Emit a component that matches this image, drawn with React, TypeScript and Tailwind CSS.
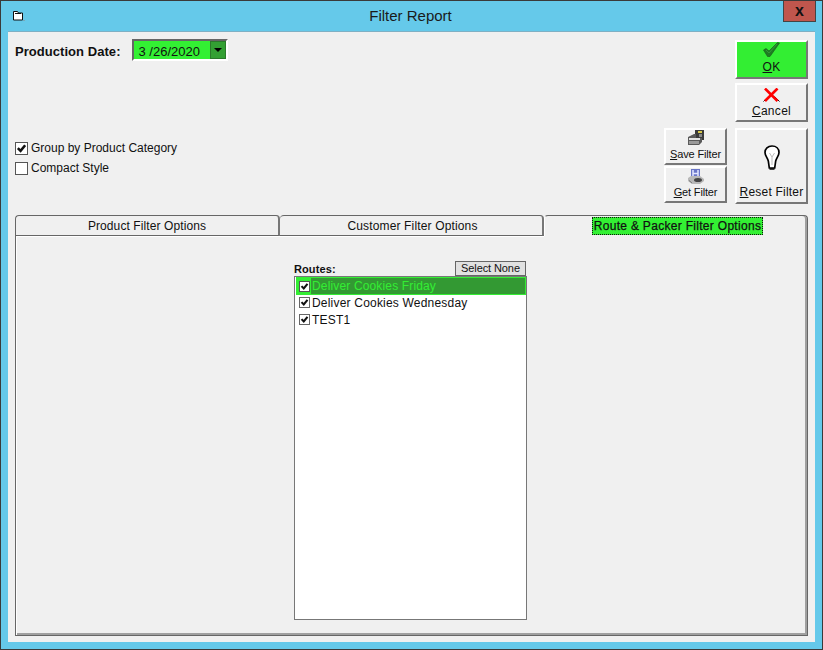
const font = "font-['Liberation_Sans',Arial,sans-serif]";

function Check({ className }: { className?: string }) {
  return (
    <svg viewBox="0 0 12 12" className={className}>
      <path d="M2 5.500 L5 8.500 L10 2.500" fill="none" stroke="#111" strokeWidth="2.800" />
    </svg>
  );
}

function CheckBox({ checked, label }: { checked?: boolean; label: string }) {
  return (
    <div className="flex items-center gap-[3px] h-[14px]">
      <span className="w-[13px] h-[13px] bg-white border border-[#555] flex items-center justify-center">
        {checked && <Check className="w-[11px] h-[11px]" />}
      </span>
      <span className="text-[12px] text-[#111]">{label}</span>
    </div>
  );
}

function RaisedButton({ className, children }: { className?: string; children: React.ReactNode }) {
  return (
    <div
      className={`flex flex-col items-center border-t-2 border-l-2 border-t-white border-l-white border-r-2 border-b-2 border-r-[#777] border-b-[#777] ${className ?? ""}`}
    >
      {children}
    </div>
  );
}

function FolderIcon() {
  return (
    <svg viewBox="0 0 13 12" className="w-[13px] h-[12px]">
      <path d="M1.500 1.500h4l1 1.500h4v7h-9z" fill="#fff" stroke="#111" />
      <path d="M3 3.500h6" stroke="#111" />
      <path d="M11.500 10.500h1" stroke="#888" />
    </svg>
  );
}

function GreenTick() {
  return (
    <svg viewBox="0 0 17 15" className="w-[17px] h-[15px]">
      <path d="M0.500 8 L3 6.500 L6 9 L14.500 0.500 L16.500 1 L7 14.500 L4.500 14.500 Z" fill="#1f7d24" stroke="#15581a" strokeWidth="0.600" />
      <path d="M3 8 L6 11 L14 2" fill="none" stroke="#3aa03f" strokeWidth="0.800" />
    </svg>
  );
}

function RedCross() {
  return (
    <svg viewBox="0 0 17 14" className="w-[17px] h-[14px]">
      <path d="M0.500 13.500 L5.500 8.500 M11.500 8.500 L16.500 13.500" stroke="#111" strokeWidth="1" />
      <path d="M2 0.500 L14.500 13" stroke="#f00" strokeWidth="2.600" />
      <path d="M14.500 0.500 L2 13" stroke="#f00" strokeWidth="2.600" />
    </svg>
  );
}

function Bulb() {
  return (
    <svg viewBox="0 0 16 25" className="w-[16px] h-[25px]">
      <path
        d="M8 1C3.800 1 1 3.800 1 7.500c0 3.300 2.700 5.500 3.300 8.500l1 7h5.400l1-7c.6-3 3.300-5.200 3.300-8.500C15 3.800 12.200 1 8 1z"
        fill="#fff"
        stroke="#000"
        strokeWidth="1.700"
      />
      <path d="M5.500 8 L8 12 L10.500 8 M8 12 V20" fill="none" stroke="#bbb" />
      <path d="M5.500 24h5" stroke="#000" strokeWidth="1.500" />
    </svg>
  );
}

function SaveIcon() {
  return (
    <svg viewBox="0 0 16 15" className="w-[16px] h-[15px]">
      <rect x="7" y="0" width="9" height="10" fill="#3a3a3a" />
      <rect x="10" y="1" width="4" height="2" fill="#d8c84a" />
      <rect x="11" y="4" width="3" height="3" fill="#8a8a8a" />
      <path d="M0 7 L6 4 H8 V8 H14 V12 L11 15 H0 Z" fill="#5a5a5a" />
      <rect x="1" y="8" width="11" height="2" fill="#e2e2e2" />
      <rect x="1" y="11" width="10" height="3" fill="#9a9a9a" />
    </svg>
  );
}

function GetIcon() {
  return (
    <svg viewBox="0 0 16 15" className="w-[16px] h-[15px]">
      <rect x="3" y="0" width="9" height="9" fill="#6a76c8" />
      <path d="M5 1v7M10 1v7M5 4.500h5" stroke="#e4e7ff" strokeWidth="1.500" />
      <path d="M0 9 L3 7 H12 L16 10 V12 L12 15 H4 L0 12 Z" fill="#b8b8b8" />
      <ellipse cx="10" cy="11" rx="4" ry="2" fill="#444" />
      <path d="M1 11.500 L4 14" stroke="#777" />
    </svg>
  );
}

export default function App() {
  return (
    <div className={`w-[823px] h-[650px] bg-[#65c9ea] border border-[#3a3a3a] flex flex-col overflow-hidden ${font}`}>
      {/* Title bar */}
      <div className="h-[30px] flex items-start shrink-0">
        <div className="pl-[11px] pt-[9px]">
          <FolderIcon />
        </div>
        <div className="flex-1 text-center text-[15px] leading-[30px] text-[#1a1a1a] pl-[13px]">Filter Report</div>
        <div className="w-[33px] h-[21px] mr-[6px] bg-[#c0564d] border border-[#444] border-t-0 flex items-center justify-center text-[#111] font-bold text-[16px] leading-none">
          x
        </div>
      </div>

      {/* Client area */}
      <div className="mx-[7px] h-[611px] bg-[#f0f0f0] shrink-0 border-t border-t-[#7fb0c4] flex flex-col text-[#111]">
        <div className="h-[183px] flex justify-between px-[7px] shrink-0">
          <div className="flex flex-col">
            <div className="flex items-center mt-[7px] h-[22px]">
              <span className="font-bold text-[13px] tracking-[0.05px] pt-[4px]">Production Date:</span>
              <div className="ml-[11px] w-[96px] h-[22px] bg-[#33f033] border-2 border-t-[#666] border-l-[#666] border-r-white border-b-white flex items-center justify-between">
                <span className="pl-[5px] text-[13px] pt-[3px]">3 /26/2020</span>
                <span className="w-[16px] h-full bg-[#33a033] border border-[#2b7a2b] flex items-center justify-center">
                  <span className="border-x-[4px] border-x-transparent border-t-[4px] border-t-black" />
                </span>
              </div>
            </div>
            <div className="flex flex-col gap-[6px] mt-[80px]">
              <CheckBox checked label="Group by Product Category" />
              <CheckBox label="Compact Style" />
            </div>
          </div>

          <div className="flex flex-col items-end">
            <RaisedButton className="mt-[8px] w-[73px] h-[39px] bg-[#33ee33]">
              <GreenTick />
              <span className="text-[12px] leading-[13px] mt-[1px] pt-[3px] tracking-[0.3px]"><u>O</u>K</span>
            </RaisedButton>
            <RaisedButton className="mt-[4px] w-[73px] h-[39px] bg-[#f0f0f0] pt-[3px]">
              <RedCross />
              <span className="text-[12px] leading-[13px] mt-[3px] tracking-[0.3px]"><u>C</u>ancel</span>
            </RaisedButton>
            <div className="flex gap-[8px] mt-[6px]">
              <div className="flex flex-col gap-px">
                <RaisedButton className="w-[63px] h-[37px]">
                  <SaveIcon />
                  <span className="text-[11px] leading-[15px] mt-[2px] tracking-[-0.15px]"><u>S</u>ave Filter</span>
                </RaisedButton>
                <RaisedButton className="w-[63px] h-[37px] pt-[1px]">
                  <GetIcon />
                  <span className="text-[11px] leading-[15px] mt-[1px] tracking-[-0.15px]"><u>G</u>et Filter</span>
                </RaisedButton>
              </div>
              <RaisedButton className="w-[73px] h-[76px] pt-[15px]">
                <Bulb />
                <span className="mt-[15px] text-[12px] leading-[14px] tracking-[0.2px]"><u>R</u>eset Filter</span>
              </RaisedButton>
            </div>
          </div>
        </div>

        {/* Tabs */}
        <div className="flex px-[7px] h-[21px] shrink-0">
          <div className="w-[265px] border border-[#666] border-r-2 border-r-[#777] rounded-t-[4px] text-center text-[12px] leading-[20px] tracking-[0.1px] shadow-[0_1px_0_#fff]">
            Product Filter Options
          </div>
          <div className="w-[264px] border border-l-0 border-[#666] border-r-2 border-r-[#777] rounded-t-[4px] pl-[3px] text-center text-[12px] leading-[20px] tracking-[0.15px] shadow-[0_1px_0_#fff]">
            Customer Filter Options
          </div>
          <div className="w-[264px] border-t border-t-[#666] border-l border-l-white border-r border-r-[#666] rounded-t-[4px] flex justify-center items-start shadow-[inset_-2px_0_0_#a0a0a0] pl-[3px]">
            <span className="mt-[1px] bg-[#33f033] border border-dotted border-[#111] text-[12px] leading-[15px] pt-[1px] tracking-[0.3px] px-[1px] [-webkit-text-stroke:0.25px_#111]">
              Route &amp; Packer Filter Options
            </span>
          </div>
        </div>

        {/* Panel */}
        <div className="mx-[7px] h-[400px] shrink-0 border-l border-l-[#666] border-r border-r-[#666] border-b border-b-[#666] shadow-[inset_-2px_-2px_0_#a0a0a0]">
          <div className="h-full border-l border-l-white flex justify-center">
            <div className="w-[233px] ml-[-3px]">
              <div className="flex justify-between items-end h-[40px]">
                <span className="text-[11px] font-bold leading-[12px] tracking-[0.1px] pb-[1px]">Routes:</span>
                <div className="w-[71px] h-[15px] bg-[#e1e1e1] border border-[#666] text-[11px] leading-[13px] text-center tracking-[-0.1px] mr-[1px]">
                  Select None
                </div>
              </div>
              <div className="h-[344px] bg-white border border-[#777] pl-px">
                <div className="h-[18px] bg-[#339933] border border-[#33ee33] flex items-center text-[#33ee33] text-[12px] tracking-[0.15px]">
                  <span className="w-[14px] h-[16px] bg-[#33ee33] flex items-center justify-center mr-[1px] shrink-0">
                    <span className="w-[11px] h-[11px] bg-white flex items-center justify-center border border-[#555]">
                      <Check className="w-[9px] h-[9px]" />
                    </span>
                  </span>
                  Deliver Cookies Friday
                </div>
                {["Deliver Cookies Wednesday", "TEST1"].map((r) => (
                  <div key={r} className="h-[17px] pb-[2px] flex items-center text-[12px] tracking-[0.2px] text-[#111]">
                    <span className="w-[11px] h-[11px] bg-white flex items-center justify-center border border-[#666] ml-[3px] mr-[2px] shrink-0">
                      <Check className="w-[9px] h-[9px]" />
                    </span>
                    {r}
                  </div>
                ))}
              </div>
            </div>
          </div>
        </div>
      </div>
    </div>
  );
}
